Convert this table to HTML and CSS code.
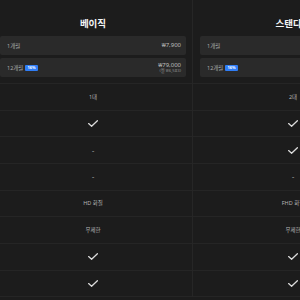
FILE: index.html
```html
<!DOCTYPE html>
<html lang="ko">
<head>
<meta charset="utf-8">
<link rel="stylesheet" href="styles.css">
</head>
<body>
<div class="plans">
  <section class="plan plan-first">
    <header class="plan-head">
      <h2 class="plan-title">베이직</h2>
      <div class="price-box">
        <span class="period">1개월</span>
        <span class="price">₩7,900</span>
      </div>
      <div class="price-box">
        <span class="period">12개월 <span class="badge">16%</span></span>
        <span class="price-col"><span class="price">₩79,000</span><span class="sub">(월 ₩6,583)</span></span>
      </div>
    </header>
    <div class="row"><span class="txt">1대</span></div>
    <div class="row"><svg class="check" viewBox="0 0 10 7"><path d="M0.6 3.6 L3.6 6.2 L9.4 0.8"/></svg></div>
    <div class="row"><span class="dash">-</span></div>
    <div class="row"><span class="dash">-</span></div>
    <div class="row"><span class="txt">HD 화질</span></div>
    <div class="row"><span class="txt">무제한</span></div>
    <div class="row"><svg class="check" viewBox="0 0 10 7"><path d="M0.6 3.6 L3.6 6.2 L9.4 0.8"/></svg></div>
    <div class="row"><svg class="check" viewBox="0 0 10 7"><path d="M0.6 3.6 L3.6 6.2 L9.4 0.8"/></svg></div>
  </section>
  <section class="plan">
    <header class="plan-head">
      <h2 class="plan-title">스탠다드</h2>
      <div class="price-box">
        <span class="period">1개월</span>
        <span class="price">₩10,900</span>
      </div>
      <div class="price-box">
        <span class="period">12개월 <span class="badge">16%</span></span>
        <span class="price-col"><span class="price">₩109,000</span><span class="sub">(월 ₩9,083)</span></span>
      </div>
    </header>
    <div class="row"><span class="txt">2대</span></div>
    <div class="row"><svg class="check" viewBox="0 0 10 7"><path d="M0.6 3.6 L3.6 6.2 L9.4 0.8"/></svg></div>
    <div class="row"><svg class="check" viewBox="0 0 10 7"><path d="M0.6 3.6 L3.6 6.2 L9.4 0.8"/></svg></div>
    <div class="row"><span class="dash">-</span></div>
    <div class="row"><span class="txt">FHD 화질</span></div>
    <div class="row"><span class="txt">무제한</span></div>
    <div class="row"><svg class="check" viewBox="0 0 10 7"><path d="M0.6 3.6 L3.6 6.2 L9.4 0.8"/></svg></div>
    <div class="row"><svg class="check" viewBox="0 0 10 7"><path d="M0.6 3.6 L3.6 6.2 L9.4 0.8"/></svg></div>
  </section>
</div>
</body>
</html>
```
FILE: styles.css
```css
html, body {
  margin: 0;
  padding: 0;
  background: #1c1c1c;
  overflow: hidden;
}
body {
  width: 300px;
  height: 300px;
  font-family: "Noto Sans", "Noto Sans CJK KR", sans-serif;
  color: #c8c8c8;
}
.plans {
  display: flex;
  width: 300px;
  overflow: hidden;
}
.plan {
  flex: 0 0 186px;
  padding: 0 6px 0 7px;
  border-left: 1px solid #262626;
}
.plan-first {
  padding-left: 0;
  border-left: none;
}
.plan-head {
  display: flex;
  flex-direction: column;
  gap: 3px;
  padding: 16px 7px 6px;
  border-bottom: 1px solid #252525;
  margin: 0 -7px;
}
.plan-first .plan-head {
  margin-left: 0;
  padding-left: 0;
}
.plan-title {
  margin: 0 0 3px;
  font-family: "Noto Sans CJK KR", sans-serif;
  font-size: 9.5px;
  line-height: 14px;
  font-weight: 700;
  color: #f4f4f4;
  text-align: center;
}
.price-box {
  height: 19px;
  box-sizing: border-box;
  background: #2a2a2a;
  border-radius: 2px;
  padding: 0 5px 0 7px;
  display: flex;
  align-items: center;
  justify-content: space-between;
}
.period {
  font-size: 5.5px;
  color: #ababab;
  display: flex;
  align-items: center;
  gap: 2px;
}
.badge {
  background: #2f7df5;
  color: #fff;
  font-size: 4px;
  font-weight: 700;
  line-height: 6px;
  padding: 0 2px;
  border-radius: 1px;
}
.price {
  font-size: 6px;
  color: #bcbcbc;
  line-height: 6.5px;
}
.price-col {
  display: flex;
  flex-direction: column;
  align-items: flex-end;
}
.sub {
  font-size: 4.3px;
  line-height: 5.5px;
  color: #8a8a8a;
}
.row {
  height: 26.67px;
  box-sizing: border-box;
  border-bottom: 1px solid #252525;
  margin: 0 -7px;
  padding: 0 7px;
  display: flex;
  align-items: center;
  justify-content: center;
}
.plan-first .row {
  margin-left: 0;
  padding-left: 0;
}
.txt {
  font-size: 5.5px;
  color: #b4b4b4;
}
.dash {
  font-size: 7px;
  font-weight: 700;
  color: #7a7a7a;
}
.check {
  width: 10px;
  height: 7px;
  fill: none;
  stroke: #dcdcdc;
  stroke-width: 1.3;
  stroke-linecap: round;
  stroke-linejoin: round;
}
```
